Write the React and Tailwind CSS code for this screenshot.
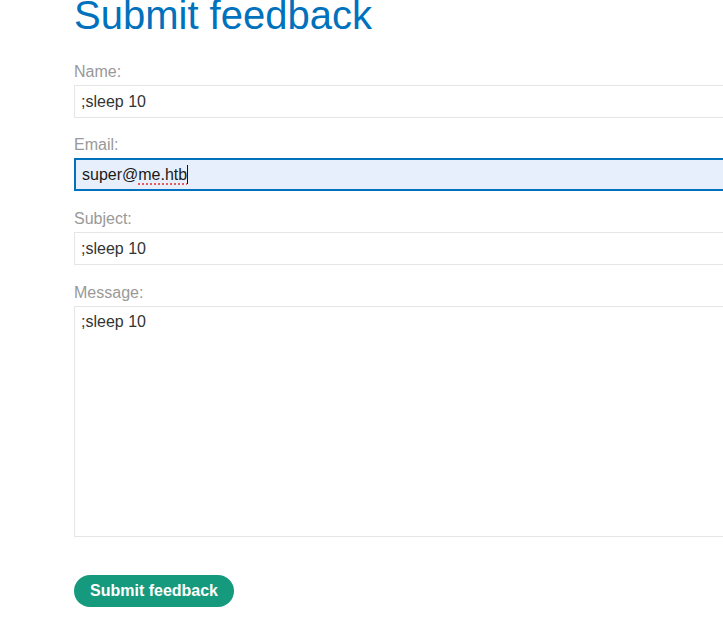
import React from 'react';

const fieldClass =
  'block w-[760px] h-[33px] border border-[#e6e6e6] bg-white px-[6px] text-[16px] text-[#333] outline-none';

const Field = ({ label, gap = 'mb-[16px]', children }) => (
  <div className={gap}>
    <label className="block text-[16px] leading-[24px] text-[#999] mb-px">{label}</label>
    {children}
  </div>
);

const App = () => {
  return (
    <div
      className="w-full h-[622px] overflow-hidden bg-white pl-[74px]"
      style={{ fontFamily: '"Liberation Sans", Arial, sans-serif' }}
    >
      <h1 className="text-[40px] leading-[44px] text-[#0071bc] font-normal -mt-[7px] mb-[23px]">
        Submit feedback
      </h1>

      <form onSubmit={(e) => e.preventDefault()}>
        <Field label="Name:" gap="mb-[15px]">
          <input className={fieldClass} defaultValue=";sleep 10" />
        </Field>

        {/* focused email field, drawn with caret and spellcheck squiggle */}
        <Field label="Email:">
          <div className="flex items-center w-[760px] h-[33px] border-2 border-[#0071bc] bg-[#e8effc] px-[6px] text-[16px] text-[#1a1a1a]">
            <span>super@</span>
            <span className="underline decoration-dotted decoration-[#e53935] underline-offset-[4px]">me.htb</span>
            <span className="inline-block w-px h-[19px] bg-[#111]" />
          </div>
        </Field>

        <Field label="Subject:">
          <input className={fieldClass} defaultValue=";sleep 10" />
        </Field>

        <Field label="Message:" gap="mb-0">
          <textarea
            className="block w-[760px] h-[231px] border border-[#e6e6e6] bg-white px-[6px] py-[3px] text-[16px] text-[#333] outline-none resize-none"
            defaultValue=";sleep 10"
          />
        </Field>

        <button
          type="submit"
          className="mt-[38px] w-[160px] h-[32px] rounded-full bg-[#169a7d] text-white font-bold text-[16px]"
        >
          Submit feedback
        </button>
      </form>
    </div>
  );
};

export default App;
